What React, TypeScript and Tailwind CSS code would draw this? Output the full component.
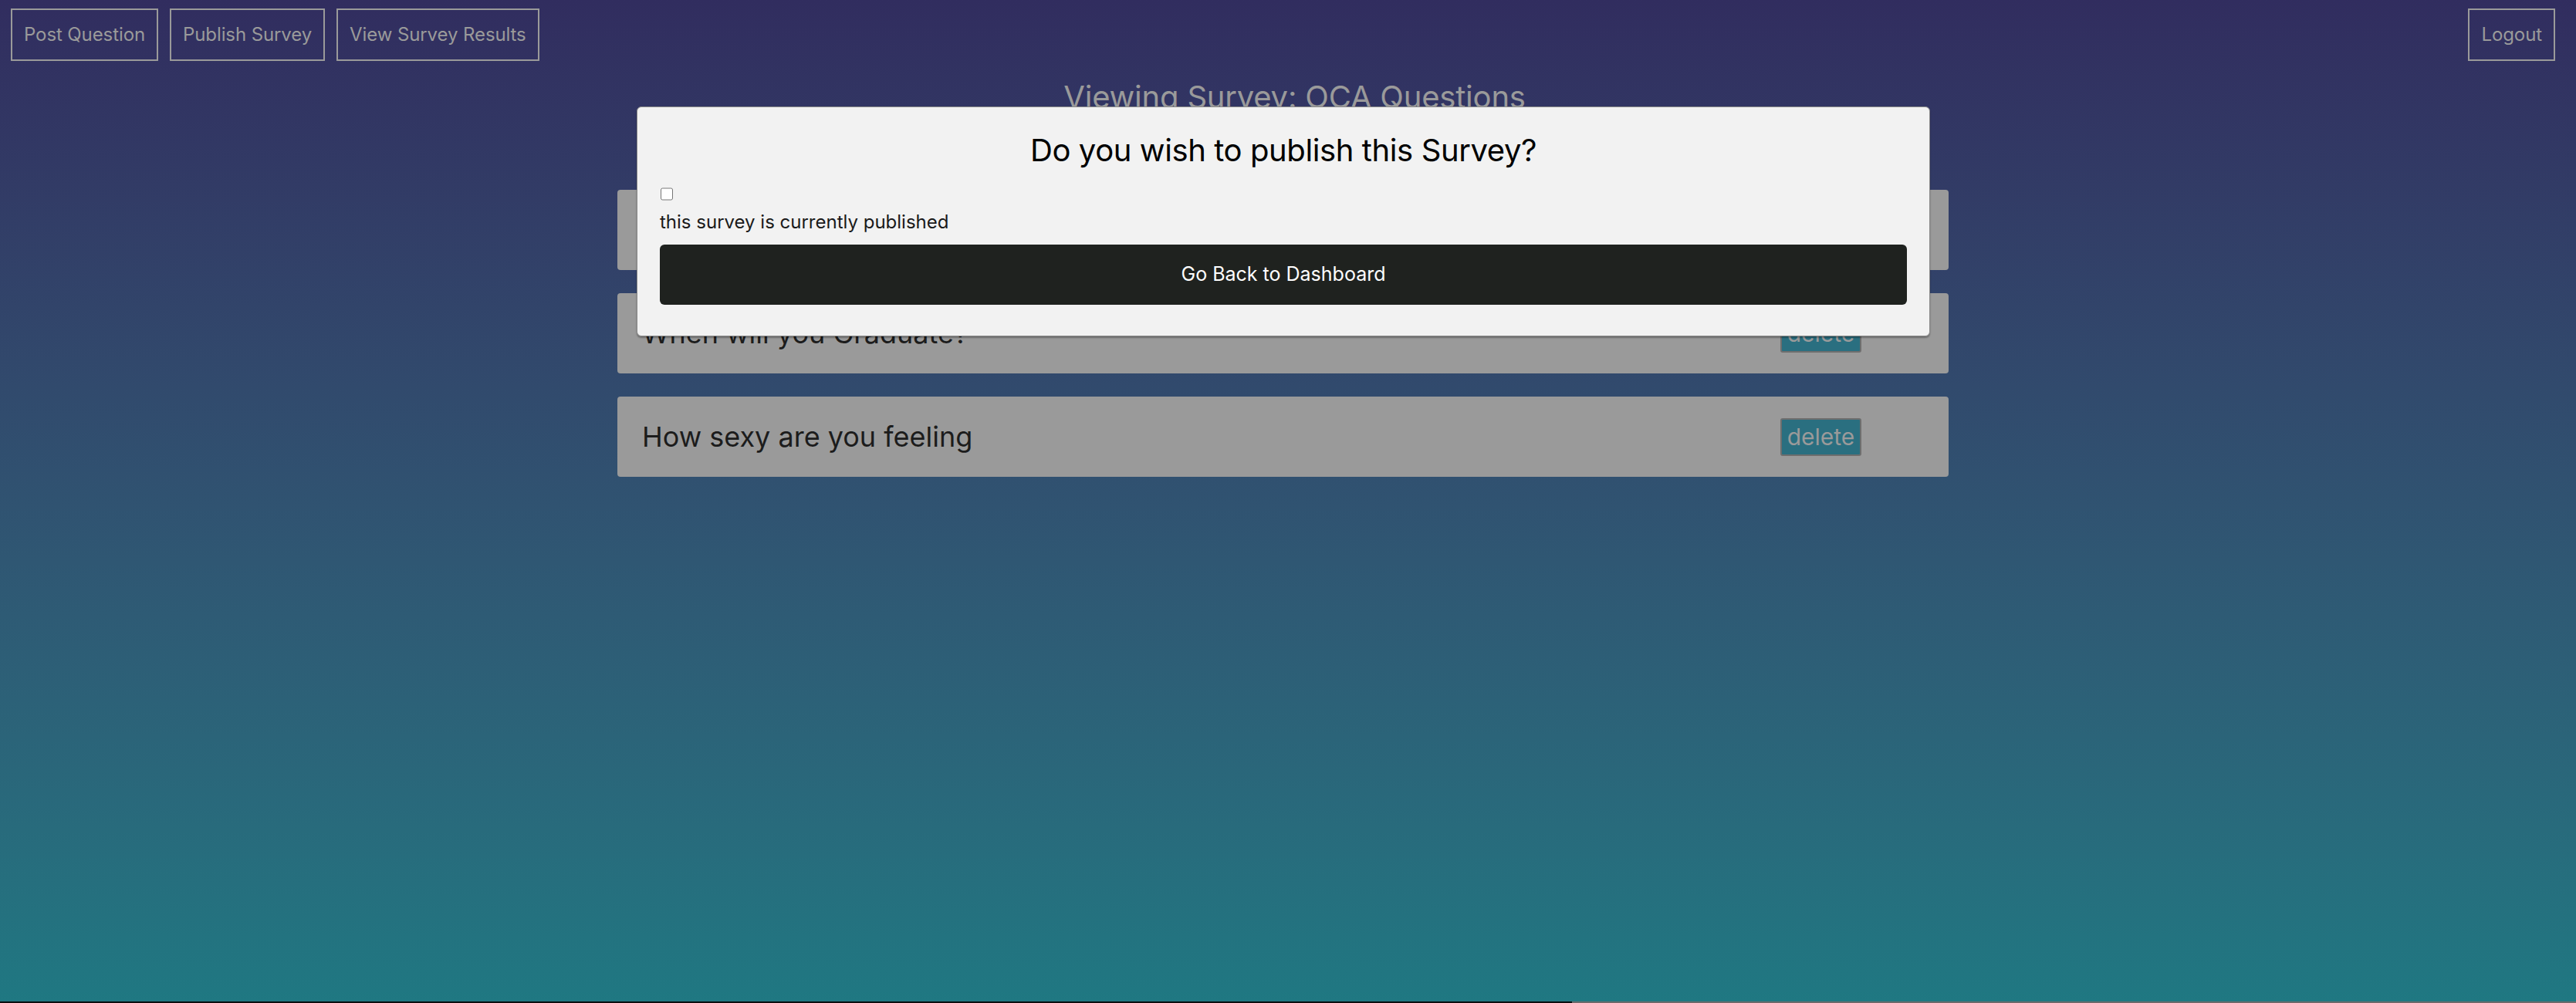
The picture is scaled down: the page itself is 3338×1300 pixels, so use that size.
import React from 'react'

const questions = [
  { id: 1, text: 'What year are you in?' },
  { id: 2, text: 'When will you Graduate?' },
  { id: 3, text: 'How sexy are you feeling' },
]

const navButton =
  'h-[68px] px-[15px] border-2 border-[#9a9a9a] text-[24px] tracking-[-0.1px] text-[#9a9a9a] bg-transparent'

export default function App() {
  return (
    <div
      className="relative h-[1300px] w-full flex flex-col bg-gradient-to-b from-[#312d5f] to-[#1f7882] overflow-hidden"
      style={{ fontFamily: 'Inter, "Liberation Sans", sans-serif' }}
    >
      <div className="flex-1 pr-[13px]">
        {/* Top nav */}
        <div className="flex items-start justify-between pl-[14px] pr-[14px] pt-[11px]">
          <div className="flex gap-[15px]">
            <button className={navButton}>Post Question</button>
            <button className={navButton}>Publish Survey</button>
            <button className={navButton}>View Survey Results</button>
          </div>
          <button className={navButton}>Logout</button>
        </div>

        {/* Title */}
        <h1 className="mt-[23px] pl-[30px] text-center text-[40px] leading-[48px] tracking-[-0.2px] text-[#9a9a9a]">
          Viewing Survey: OCA Questions
        </h1>

        {/* Question list */}
        <div className="mx-auto mt-[96px] w-[1725px] flex flex-col gap-[30px]">
          {questions.map((q) => (
            <div
              key={q.id}
              className="h-[104px] rounded-[4px] bg-[#9a9a9a] flex items-center pl-[32px] pr-[113px]"
            >
              <span className="flex-1 text-[36px] text-[#1c1c1c]">{q.text}</span>
              <button className="h-[49px] w-[105px] rounded-[3px] border-2 border-[#6e6e6e] bg-[#2a6f80] text-[30px] leading-none text-[#9a9a9a]">
                delete
              </button>
            </div>
          ))}
        </div>
      </div>

      {/* bottom edge */}
      <div className="flex h-[2px]">
        <div className="w-[2037px] bg-[#0a0f10]" />
        <div className="flex-1 bg-[#6b6b6b]" />
      </div>

      {/* Publish modal */}
      <div className="absolute left-[825px] top-[138px] w-[1676px] h-[298px] rounded-[6px] border border-[#8a8a8a] bg-[#f2f2f2] shadow-[0_2px_2px_rgba(0,0,0,0.3)] px-[29px]">
        <h2 className="mt-[31px] text-center text-[40px] leading-[50px] tracking-[-0.4px] text-black">
          Do you wish to publish this Survey?
        </h2>
        <div className="mt-[23px]">
          <input type="checkbox" className="block h-[17px] w-[16px] ml-[1px]" />
        </div>
        <p className="mt-[13px] text-[24px] leading-[30px] text-[#1a1a1a]">
          this survey is currently published
        </p>
        <button className="mt-[14px] h-[78px] w-full rounded-[6px] bg-[#1f221f] text-[25px] text-white">
          Go Back to Dashboard
        </button>
      </div>
    </div>
  )
}
